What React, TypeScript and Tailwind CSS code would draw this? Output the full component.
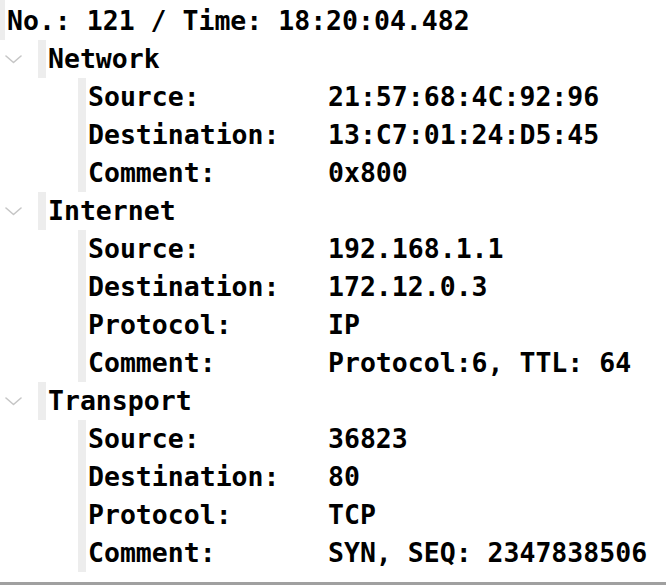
import React from 'react';

interface Field {
  label: string;
  value: string;
}

interface Section {
  title: string;
  fields: Field[];
}

const SECTIONS: Section[] = [
  {
    title: 'Network',
    fields: [
      { label: 'Source:', value: '21:57:68:4C:92:96' },
      { label: 'Destination:', value: '13:C7:01:24:D5:45' },
      { label: 'Comment:', value: '0x800' },
    ],
  },
  {
    title: 'Internet',
    fields: [
      { label: 'Source:', value: '192.168.1.1' },
      { label: 'Destination:', value: '172.12.0.3' },
      { label: 'Protocol:', value: 'IP' },
      { label: 'Comment:', value: 'Protocol:6, TTL: 64' },
    ],
  },
  {
    title: 'Transport',
    fields: [
      { label: 'Source:', value: '36823' },
      { label: 'Destination:', value: '80' },
      { label: 'Protocol:', value: 'TCP' },
      { label: 'Comment:', value: 'SYN, SEQ: 2347838506' },
    ],
  },
];

const Chevron: React.FC = () => (
  <svg width="17" height="9" viewBox="0 0 17 9" className="block">
    <polyline points="1,1 8.5,7.5 16,1" fill="none" stroke="#c6c6c6" strokeWidth="1.6" strokeLinecap="round" strokeLinejoin="round" />
  </svg>
);

const SectionBlock: React.FC<{ section: Section }> = ({ section }) => (
  <div>
    {/* Section header */}
    <div className="flex h-[38px] items-stretch">
      <div className="flex w-[38px] items-center pl-[5px]">
        <Chevron />
      </div>
      <div className="w-[8px] bg-[#ededed]" />
      <div className="flex items-center pl-[2px]">{section.title}</div>
    </div>

    {/* Fields */}
    <div className="flex">
      <div className="w-[78px] shrink-0" />
      <div className="w-[8px] shrink-0 bg-[#ededed]" />
      <div className="flex flex-col pl-[2px]">
        {section.fields.map(f => (
          <div key={f.label} className="flex h-[38px] items-center whitespace-pre">
            <span className="w-[240px] shrink-0">{f.label}</span>
            <span>{f.value}</span>
          </div>
        ))}
      </div>
    </div>
  </div>
);

export default function App() {
  return (
    <div
      className="w-[666px] h-[586px] overflow-hidden bg-white text-black font-bold text-[26.5px] leading-[38px]"
      style={{ fontFamily: '"DejaVu Sans Mono", "Liberation Mono", monospace' }}
    >
      {/* Packet header */}
      <div className="flex h-[40px] items-stretch">
        <div className="w-[5px] bg-[#ededed]" />
        <div className="flex items-center pl-[2px] pt-[2px] whitespace-pre">No.: 121 / Time: 18:20:04.482</div>
      </div>

      {SECTIONS.map(s => (
        <SectionBlock key={s.title} section={s} />
      ))}

      <div className="mt-[10px] h-[3px] bg-[#a0a0a0]" />
    </div>
  );
}
